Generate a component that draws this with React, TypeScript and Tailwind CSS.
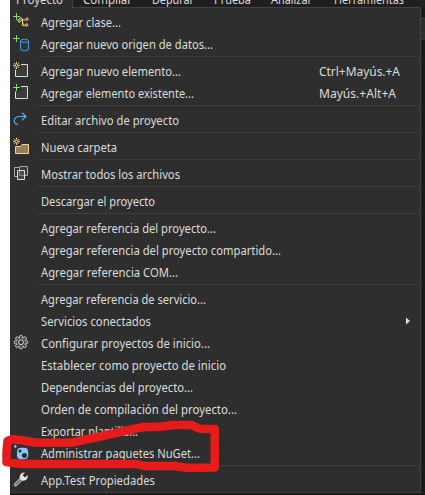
import type { ReactNode } from "react";

type Entry = {
  label: string;
  width: string;
  icon?: ReactNode;
  shortcut?: string;
  shortcutWidth?: string;
  submenu?: boolean;
};

function Icon({ children }: { children: ReactNode }) {
  return (
    <svg width="18" height="22" viewBox="0 0 18 22" fill="none" className="block">
      {children}
    </svg>
  );
}

const plus = <path d="M0 5.5H7M3.5 2V9" stroke="#7be07b" />;
const spark = (
  <g stroke="#f0cd85">
    <path d="M3.5 1.8v2M3.5 7v2M0 5.4h2M5 5.4h2M1 2.9l1.3 1.3M4.7 6.6L6 7.9M6 2.9L4.7 4.2M2.3 6.6L1 7.9" />
    <circle cx="3.5" cy="5.4" r="1.4" />
  </g>
);

const classIcon = (
  <Icon>
    <path d="M4.5 9.5l3-3 2 1.5-3 3.5zM9 8.8h3.5M9.5 9v5.5h2.5M12.5 8.3l1.6-1.6 1.4 1.4-1.6 1.6zM12 14.2l1.7-1.7 1.5 1.5-1.7 1.7z" fill="#806d4b" stroke="#f0cd85" />
    {plus}
  </Icon>
);
const databaseIcon = (
  <Icon>
    <path d="M7.5 8v8c0 2.3 8 2.3 8 0V8" fill="#2d363d" stroke="#4aa0df" />
    <ellipse cx="11.5" cy="7.8" rx="4" ry="1.6" fill="#2d363d" stroke="#4aa0df" />
    {plus}
  </Icon>
);
const itemBox = (
  <>
    <path d="M8 4.5h6.5v12h-12V9H8z" fill="#3c3c3c" />
    <path d="M8 4.5h6.5v12h-12V9.5" stroke="#dedede" />
  </>
);
const newItemIcon = (
  <Icon>
    {itemBox}
    {spark}
  </Icon>
);
const existingItemIcon = (
  <Icon>
    {itemBox}
    {plus}
  </Icon>
);
const redoIcon = (
  <Icon>
    <path d="M13 7.5H7C0 7.5-.5 14.5 5 15.5M9 3.7l4 3.8-4 3.8" stroke="#55aee9" strokeWidth="1.2" />
  </Icon>
);
const folderIcon = (
  <Icon>
    <path d="M2.5 10.5h5l1.5-2h6.5v9h-13z" fill="#92805c" />
    <path d="M2.5 10.5v7h13v-9H9l-1.5 2h-5" stroke="#f5d38c" />
    {spark}
  </Icon>
);
const filesIcon = (
  <Icon>
    <path d="M4.5 13.5h-3v-9h6" stroke="#a8a8a8" />
    <path d="M6.5 3.5h8v9h-8z" fill="#393939" stroke="#a8a8a8" />
    <path d="M4.5 7.5h7v9h-7z" fill="#626262" fillOpacity=".45" stroke="#dedede" />
  </Icon>
);
const gearIcon = (
  <Icon>
    <g fill="#3c3c3c" stroke="#d6d6d6" strokeWidth=".9">
      <circle cx="8" cy="5" r="1.6" />
      <circle cx="11.8" cy="6.5" r="1.6" />
      <circle cx="13.2" cy="10.2" r="1.6" />
      <circle cx="11.8" cy="13.9" r="1.6" />
      <circle cx="8" cy="15.4" r="1.6" />
      <circle cx="4.2" cy="13.9" r="1.6" />
      <circle cx="2.8" cy="10.2" r="1.6" />
      <circle cx="4.2" cy="6.5" r="1.6" />
    </g>
    <circle cx="8" cy="10.2" r="4.3" fill="#484848" />
    <circle cx="8" cy="10.2" r="2.4" fill="#2e2e2e" stroke="#dedede" />
  </Icon>
);
const nugetIcon = (
  <Icon>
    <rect x="4" y="5.7" width="11.2" height="11.5" rx="4" fill="#8ac8f9" />
    <circle cx="2.3" cy="4.4" r="1.3" fill="#8ac8f9" />
    <circle cx="7" cy="9" r="1.6" fill="#252b31" />
    <circle cx="11.4" cy="13.4" r="2.5" fill="#252b31" />
  </Icon>
);
const wrenchIcon = (
  <Icon>
    <path d="M1.5 14.8L7 9.3l2 2-5.5 5.5q-1 .7-1.8 0t-.2-2z" fill="#777" stroke="#dadada" strokeWidth=".9" />
    <path d="M7 10C5.7 6.3 8.5 2.8 12 3.5L9.7 6.3l2.2 2.2L14.5 6c1 3.5-2 6.6-5.5 5.5z" fill="#e3e3e3" />
  </Icon>
);

const groups: Entry[][] = [
  [
    { label: "Agregar clase...", width: "80", icon: classIcon },
    { label: "Agregar nuevo origen de datos...", width: "172", icon: databaseIcon },
  ],
  [
    { label: "Agregar nuevo elemento...", width: "140", icon: newItemIcon, shortcut: "Ctrl+Mayús.+A", shortcutWidth: "81" },
    { label: "Agregar elemento existente...", width: "153", icon: existingItemIcon, shortcut: "Mayús.+Alt+A", shortcutWidth: "77" },
  ],
  [{ label: "Editar archivo de proyecto", width: "138", icon: redoIcon }],
  [{ label: "Nueva carpeta", width: "76", icon: folderIcon }],
  [{ label: "Mostrar todos los archivos", width: "139", icon: filesIcon }],
  [{ label: "Descargar el proyecto", width: "114" }],
  [
    { label: "Agregar referencia del proyecto...", width: "175" },
    { label: "Agregar referencia del proyecto compartido...", width: "240" },
    { label: "Agregar referencia COM...", width: "137" },
  ],
  [
    { label: "Agregar referencia de servicio...", width: "165" },
    { label: "Servicios conectados", width: "110", submenu: true },
    { label: "Configurar proyectos de inicio...", width: "169", icon: gearIcon },
    { label: "Establecer como proyecto de inicio", width: "185" },
    { label: "Dependencias del proyecto...", width: "152" },
    { label: "Orden de compilación del proyecto...", width: "196" },
    { label: "Exportar plantilla...", width: "97" },
    { label: "Administrar paquetes NuGet...", width: "159", icon: nugetIcon },
  ],
  [{ label: "App.Test Propiedades", width: "114", icon: wrenchIcon }],
];

/* A line of menu text set to an exact advance width. */
function Label({ text, width }: { text: string; width: string }) {
  return (
    <svg width={width} height="22" className="block overflow-visible">
      <text x="0" y="16" textLength={width} lengthAdjust="spacingAndGlyphs" fill="#dcdcdc">
        {text}
      </text>
    </svg>
  );
}

function Row({ entry }: { entry: Entry }) {
  return (
    <div className="flex h-[22px] items-center">
      <div className="w-[28px] shrink-0">{entry.icon}</div>
      <Label text={entry.label} width={entry.width} />
      {entry.shortcut && (
        <div className="mr-[17px] ml-auto w-[81px]">
          <Label text={entry.shortcut} width={entry.shortcutWidth ?? "0"} />
        </div>
      )}
      {entry.submenu && (
        <svg width="4" height="8" viewBox="0 0 4 8" className="mr-[7px] ml-auto">
          <path d="M0 0.5L4 4L0 7.5Z" fill="#dedede" />
        </svg>
      )}
    </div>
  );
}

export default function App() {
  return (
    <div className="relative h-[495px] w-[425px] overflow-hidden bg-white font-['Noto_Sans','Open_Sans',sans-serif] text-[12px]">
      <div className="ml-[10px] flex h-full flex-col bg-[#1b1b1b]">
        <header className="flex h-[7px] overflow-hidden bg-[#1f1f1f]">
          <div className="h-[7px] w-[63px] border-r border-[#424242] bg-[#2e2e2e] pl-[6px]">
            <div className="-mt-[12px]"><Label text="Proyecto" width="47" /></div>
          </div>
          <nav className="-mt-[12px] flex pl-[10px]">
            <div className="w-[69px]"><Label text="Compilar" width="49" /></div>
            <div className="w-[62px]"><Label text="Depurar" width="42" /></div>
            <div className="w-[57px]"><Label text="Prueba" width="37" /></div>
            <div className="w-[63px]"><Label text="Analizar" width="41" /></div>
            <div><Label text="Herramientas" width="70" /></div>
          </nav>
        </header>
        <div className="flex">
          <main className="h-[486px] w-[411px] border-r border-b border-[#424242] bg-[#2e2e2e]">
            <div className="flex">
              <div className="h-px w-[62px]" />
              <div className="h-px flex-1 bg-[#424242]" />
            </div>
            <div className="pt-[3px] pr-[3px] pl-[3px]">
              {groups.map((group, index) => (
                <section key={index}>
                  {index > 0 && (
                    <div className="h-[5px] pt-px pl-[24px]">
                      <div className="h-px bg-[#3d3d3d]" />
                    </div>
                  )}
                  {group.map((entry) => (
                    <Row key={entry.label} entry={entry} />
                  ))}
                </section>
              ))}
            </div>
          </main>
          <aside className="w-[4px] pt-[11px]">
            <div className="h-[22px] border-y border-[#3d3d3d] bg-[#2e2e2e]" />
          </aside>
        </div>
        <footer className="h-[2px] pl-[96px]">
          <div className="h-[2px] w-px bg-[#363636]" />
        </footer>
      </div>
      {/* Freehand marker ring around the NuGet entry */}
      <svg width="425" height="495" className="pointer-events-none absolute top-0 left-0" fill="none">
        <path
          d="M12 439.2L20 440L36 442.7H72L84 440L143 427H158L174 425H191L200 428.7L214.7 429V467.5L186 467.8L175 466H144L137 464H21L6.5 462V452L7.5 441L12 439.2Z"
          stroke="#e81b1b"
          strokeWidth="8.5"
          strokeLinecap="round"
          strokeLinejoin="round"
        />
      </svg>
    </div>
  );
}
